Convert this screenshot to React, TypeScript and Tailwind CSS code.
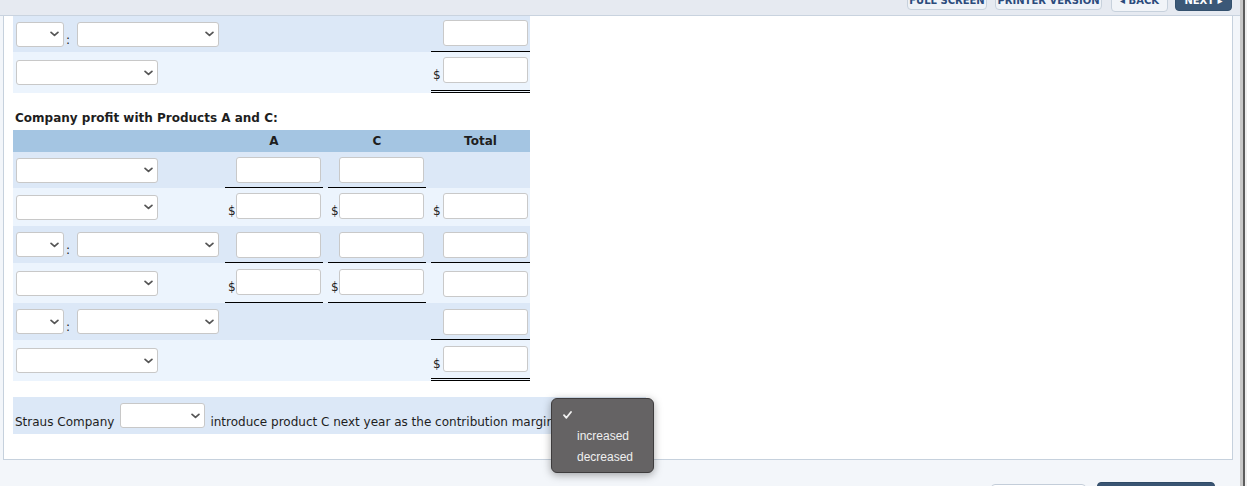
import React from "react";

const Chevron = () => (
  <svg width="9" height="6" viewBox="0 0 10 6" className="shrink-0">
    <path d="M1.2 1.2L5 4.6l3.8-3.4" fill="none" stroke="#555" strokeWidth="1.9" strokeLinecap="round" strokeLinejoin="round" />
  </svg>
);

function Select({ w }: { w: string }) {
  return (
    <div className={`${w} h-[25px] shrink-0 bg-white border border-[#c8c8c8] rounded-[3px] flex items-center justify-end pr-[4px]`}>
      <Chevron />
    </div>
  );
}

function Box() {
  return <input type="text" readOnly className="w-[85px] h-[26px] shrink-0 bg-white border border-[#c9c9c9] rounded-[3px] outline-none" />;
}

function Label({ kind }: { kind: "one" | "two" }) {
  if (kind === "one") {
    return (
      <div className="pl-[3px] flex items-center">
        <Select w="w-[142px]" />
      </div>
    );
  }
  return (
    <div className="pl-[3px] flex items-center">
      <div className="flex items-end">
        <Select w="w-[48px]" />
        <span className="w-[13px] pl-[2px] leading-[14px] text-[12px]">:</span>
        <Select w="w-[142px]" />
      </div>
    </div>
  );
}

type Line = "none" | "single" | "double";

function Num({
  has,
  dollar = false,
  line = "none",
  pt = "pt-[5px]",
  total = false,
}: {
  has: boolean;
  dollar?: boolean;
  line?: Line;
  pt?: string;
  total?: boolean;
}) {
  const lineCls =
    line === "single"
      ? "border-b border-black"
      : line === "double"
      ? "border-b-[3px] border-double border-black"
      : "";
  return (
    <div className={total ? "" : "pr-[5px]"}>
      <div className={`h-full ${total ? "pl-[2px]" : "pl-[3px]"} ${pt} ${lineCls}`}>
        {has && (
          <div className="flex items-end">
            <span className={`${total ? "w-[10px]" : "w-[8px]"} text-[12px] leading-[12px] mb-[2px]`}>{dollar ? "$" : ""}</span>
            <Box />
          </div>
        )}
      </div>
    </div>
  );
}

const DARK = "bg-[#dce8f7]";
const LIGHT = "bg-[#ecf4fd]";
const GRID = "grid grid-cols-[212px_103px_103px_99px] w-[517px]";

export default function App() {
  return (
    <div className="relative w-[1247px] h-[486px] overflow-hidden bg-white flex font-['DejaVu_Sans',Verdana,sans-serif] text-[12px] text-[#1e1e1e]">
      <div className="w-[1240px] h-full bg-[#f3f6fa] flex flex-col">
        {/* top bar */}
        <div className="h-[16px] shrink-0 bg-[#e6eaf1] border-b border-[#c9d3df] flex justify-end pr-[8px] overflow-hidden">
          <div className="flex items-start font-bold text-[10px] text-[#2b4b7c]">
            <div className="w-[80px] h-[20px] -mt-[10px] mr-[8px] bg-[#eef2f7] border border-[#c7d1dc] rounded-[4px] flex items-end justify-center pb-[2px] leading-[12px]">FULL SCREEN</div>
            <div className="w-[107px] h-[20px] -mt-[10px] mr-[9px] bg-[#eef2f7] border border-[#c7d1dc] rounded-[4px] flex items-end justify-center pb-[2px] leading-[12px]">PRINTER VERSION</div>
            <div className="w-[57px] h-[22px] -mt-[10px] mr-[7px] bg-[#f1f4f8] border border-[#c7d1dc] rounded-[4px] flex items-end justify-center pb-[4px] leading-[12px]">◂ BACK</div>
            <div className="w-[57px] h-[21px] -mt-[10px] bg-[#3b5877] border border-[#33506d] rounded-[4px] flex items-end justify-center pb-[3px] leading-[12px] text-white">NEXT ▸</div>
          </div>
        </div>

        {/* panel */}
        <div className="ml-[3px] w-[1230px] h-[444px] shrink-0 bg-white border-l border-r border-b border-[#c6d1dd] pl-[9px]">
          {/* first table (continued) */}
          <div className={`${GRID} ${DARK} h-[36px]`}>
            <Label kind="two" />
            <Num has={false} />
            <Num has={false} />
            <Num has total line="single" pt="pt-[4px]" />
          </div>
          <div className={`${GRID} ${LIGHT} h-[41px]`}>
            <Label kind="one" />
            <Num has={false} />
            <Num has={false} />
            <Num has total dollar line="double" pt="pt-[5px]" />
          </div>

          <div className="mt-[17px] mb-[4px] h-[16px] leading-[16px] font-bold pl-[2px]">Company profit with Products A and C:</div>

          <div className={`${GRID} bg-[#a4c5e2] h-[22px] font-bold text-[12px]`}>
            <div />
            <div className="pr-[5px] pb-[1px] flex items-center justify-center">A</div>
            <div className="pr-[5px] pb-[1px] flex items-center justify-center">C</div>
            <div className="pb-[1px] flex items-center justify-center">Total</div>
          </div>
          <div className={`${GRID} ${DARK} h-[36px]`}>
            <Label kind="one" />
            <Num has line="single" pt="pt-[5px]" />
            <Num has line="single" pt="pt-[5px]" />
            <Num has={false} total />
          </div>
          <div className={`${GRID} ${LIGHT} h-[38px]`}>
            <Label kind="one" />
            <Num has dollar pt="pt-[5px]" />
            <Num has dollar pt="pt-[5px]" />
            <Num has dollar total pt="pt-[5px]" />
          </div>
          <div className={`${GRID} ${DARK} h-[37px]`}>
            <Label kind="two" />
            <Num has line="single" pt="pt-[6px]" />
            <Num has line="single" pt="pt-[6px]" />
            <Num has total line="single" pt="pt-[6px]" />
          </div>
          <div className={`${GRID} ${LIGHT} h-[40px]`}>
            <Label kind="one" />
            <Num has dollar line="single" pt="pt-[6px]" />
            <Num has dollar line="single" pt="pt-[6px]" />
            <Num has total pt="pt-[8px]" />
          </div>
          <div className={`${GRID} ${DARK} h-[37px]`}>
            <Label kind="two" />
            <Num has={false} />
            <Num has={false} />
            <Num has total line="single" pt="pt-[6px]" />
          </div>
          <div className={`${GRID} ${LIGHT} h-[41px]`}>
            <Label kind="one" />
            <Num has={false} />
            <Num has={false} />
            <Num has total dollar line="double" pt="pt-[6px]" />
          </div>

          {/* sentence */}
          <div className={`mt-[16px] h-[37px] inline-flex items-end pb-[4px] pl-[2px] pr-[2px] ${DARK}`}>
            <span className="leading-[16px] whitespace-nowrap">Straus Company</span>
            <div className="ml-[6px] mr-[5px] mb-[2px]">
              <Select w="w-[85px]" />
            </div>
            <span className="leading-[16px] whitespace-nowrap">introduce product C next year as the contribution margin</span>
            <div className="ml-[5px] mb-[2px]">
              <Select w="w-[85px]" />
            </div>
          </div>
        </div>

        {/* bottom */}
        <div className="flex justify-end items-start pr-[25px]">
          <div className="w-[95px] h-[20px] mt-[24px] mr-[11px] bg-white border border-[#c3cdd9] rounded-[4px]" />
          <div className="w-[118px] h-[20px] mt-[22px] bg-[#3a5573] border border-[#2f4a66] rounded-[4px]" />
        </div>
      </div>
      <div className="w-[3px] h-full bg-[#c8c8c8]" />
      <div className="w-[2px] h-full bg-[#5c5c5c]" />
      <div className="flex-1 h-full bg-[#efefef]" />

      {/* open dropdown */}
      <div className="absolute left-[551px] top-[398px] w-[103px] h-[75px] rounded-[6px] bg-[#656364] border border-[#3e3c3d] shadow-[0_2px_8px_rgba(0,0,0,0.35)] pt-[6px] font-['Liberation_Sans',Arial,sans-serif] text-[12px] text-[#efefef]">
        <div className="relative h-[21px]">
          <svg width="9" height="8" viewBox="0 0 9 8" className="absolute left-[11px] top-[6px]">
            <path d="M1 4.2l2.4 2.6L8 1" fill="none" stroke="#f2f2f2" strokeWidth="1.8" strokeLinecap="round" strokeLinejoin="round" />
          </svg>
        </div>
        <div className="h-[21px] leading-[21px] pl-[25px]">increased</div>
        <div className="h-[21px] leading-[21px] pl-[25px]">decreased</div>
      </div>
    </div>
  );
}
